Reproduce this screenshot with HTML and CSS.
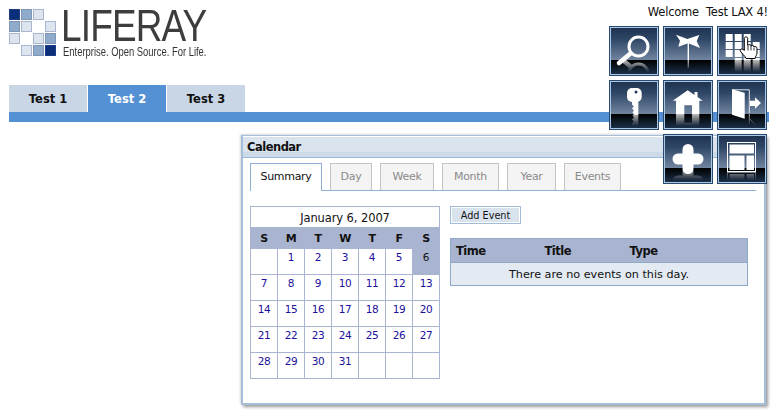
FILE: index.html
```html
<!DOCTYPE html>
<html lang="en">
<head>
<meta charset="utf-8">
<title>Liferay Calendar</title>
<link rel="stylesheet" href="styles.css">
</head>
<body>
<svg class="defs" width="0" height="0" aria-hidden="true">
  <defs>
    <linearGradient id="sky" x1="0" y1="0" x2="0" y2="1">
      <stop offset="0" stop-color="#1e3350"/>
      <stop offset="0.35" stop-color="#2f4766"/>
      <stop offset="1" stop-color="#7185a0"/>
    </linearGradient>
    <linearGradient id="floor" x1="0" y1="0" x2="0" y2="1">
      <stop offset="0" stop-color="#000"/>
      <stop offset="1" stop-color="#1b3049"/>
    </linearGradient>
    <linearGradient id="fadeGrad" gradientUnits="userSpaceOnUse" x1="0" y1="34" x2="0" y2="46">
      <stop offset="0" stop-color="#fff" stop-opacity="0.75"/>
      <stop offset="1" stop-color="#fff" stop-opacity="0"/>
    </linearGradient>
    <mask id="fade" maskUnits="userSpaceOnUse" x="2" y="34" width="46" height="14">
      <rect x="2" y="34" width="46" height="14" fill="url(#fadeGrad)"/>
    </mask>
    <symbol id="base" viewBox="0 0 50 50">
      <rect x="0.5" y="0.5" width="49" height="49" fill="#a9c8e8" stroke="#2b4a6d"/>
      <rect x="2" y="2" width="46" height="32" fill="url(#sky)"/>
      <rect x="2" y="34" width="46" height="14" fill="url(#floor)"/>
    </symbol>
    <g id="g-search">
      <circle cx="29.5" cy="20.5" r="9.5" fill="none" stroke="#fff" stroke-width="3"/>
      <path d="M21.5 27.5 10 37" fill="none" stroke="#fff" stroke-width="4.5" stroke-linecap="round"/>
    </g>
    <g id="g-bow">
      <path d="M13 8.700 24.300 13 36.300 9 33.700 15.300 37 22 25.300 17.300 15.300 20.700 17 14.700Z" fill="#fff"/>
      <path d="M25.300 17V34" stroke="#fff" stroke-width="1.400"/>
    </g>
    <g id="g-grid" fill="#fff">
      <rect x="8.700" y="8" width="7" height="7"/><rect x="17.700" y="8" width="7" height="7"/><rect x="26.700" y="8" width="7" height="7"/>
      <rect x="8.700" y="16" width="7" height="7"/><rect x="17.700" y="16" width="7" height="7"/><rect x="26.700" y="16" width="7" height="7"/><rect x="35.700" y="16" width="7" height="7"/>
      <rect x="8.700" y="24" width="7" height="7"/><rect x="17.700" y="24" width="7" height="7"/><rect x="26.700" y="24" width="7" height="7"/><rect x="35.700" y="24" width="7" height="7"/>
      <rect x="17.700" y="32" width="7" height="2"/><rect x="26.700" y="32" width="7" height="2"/><rect x="35.700" y="32" width="7" height="2"/>
    </g>
    <g id="g-key">
      <rect x="18" y="8" width="14.700" height="14" rx="5" fill="#fff"/>
      <path d="M23 21H29.300V34.700H25.500L23.500 32.500 25 30.500 23 28.500 24.800 26.500 23 24.500Z" fill="#fff"/>
      <circle cx="27" cy="12" r="1.500" fill="#23385a"/>
    </g>
    <g id="g-home">
      <path d="M9.700 20.700 24.700 10.300 31.500 15V12H34.500V17L39.700 20.700H36.300V34H29V25.300H21.300V34H13V20.700Z" fill="#fff"/>
    </g>
    <g id="g-door">
      <path d="M15 9.800H32.300V33" fill="none" stroke="#dfe6ee" stroke-width="1"/>
      <path d="M15 9.300 27.700 12.700V38.700L15 34.700Z" fill="#fff"/>
      <path d="M33 20.700H38V17.300L44 23 38 28.700V26H33Z" fill="#fff"/>
    </g>
    <g id="g-plus">
      <path d="M25 15.500V34.500M15 25H35" stroke="#fff" stroke-width="11" stroke-linecap="round" fill="none"/>
    </g>
    <g id="g-layout">
      <rect x="10.500" y="8.500" width="28" height="29" fill="none" stroke="#fff"/>
      <rect x="12.500" y="10.500" width="24.500" height="9" fill="#fff"/>
      <rect x="12.500" y="21.500" width="15" height="14.500" fill="#fff"/>
      <rect x="29.500" y="21.500" width="7.500" height="14.500" fill="#fff"/>
    </g>
    <g id="g-hand">
      <path d="M27.300 12.500C27.300 10.300 30.700 10.300 30.700 12.500V19.500C32 18 34 18.500 34 20 35 18.800 37 19.300 37 21 38 20 40 20.500 40 22.500V27C40 29 38.500 30 38 32.500H29C28.500 30 24.500 27.500 23.300 25 22.500 23 25.500 22 27.300 24.500Z" fill="#fff" stroke="#000" stroke-width="1" stroke-linejoin="round"/>
      <path d="M31 20V24.500M34 20V24.500M37 21.500V24.500" stroke="#000" stroke-width="0.800" fill="none"/>
    </g>
  </defs>
</svg>

<nav class="dock" aria-label="Dock">
  <svg class="dock-icon" viewBox="0 0 50 50"><use href="#base"/><use href="#g-search"/><g mask="url(#fade)"><use href="#g-search" transform="matrix(1 0 0 -1 0 68)"/></g></svg>
  <svg class="dock-icon" viewBox="0 0 50 50"><use href="#base"/><use href="#g-bow"/><g mask="url(#fade)"><path d="M25.300 34V42" stroke="#fff" stroke-width="1.400"/></g></svg>
  <svg class="dock-icon" viewBox="0 0 50 50"><use href="#base"/><use href="#g-grid"/><g mask="url(#fade)"><path d="M17.700 34h7v12h-7zM26.700 34h7v12h-7zM35.700 34h7v12h-7z" fill="#fff"/></g><use href="#g-hand"/></svg>
  <svg class="dock-icon" viewBox="0 0 50 50"><use href="#base"/><use href="#g-key"/><g mask="url(#fade)"><use href="#g-key" transform="matrix(1 0 0 -1 0 68)"/></g></svg>
  <svg class="dock-icon" viewBox="0 0 50 50"><use href="#base"/><use href="#g-home"/><g mask="url(#fade)"><use href="#g-home" transform="matrix(1 0 0 -1 0 68)"/></g></svg>
  <svg class="dock-icon" viewBox="0 0 50 50"><use href="#base"/><use href="#g-door"/><g mask="url(#fade)"><path d="M32.300 34V44M33 39 39 46" stroke="#fff" stroke-width="1" fill="none"/></g></svg>
  <span class="dock-gap"></span>
  <svg class="dock-icon" viewBox="0 0 50 50"><use href="#base"/><use href="#g-plus"/><g mask="url(#fade)"><use href="#g-plus" transform="matrix(1 0 0 -1 0 72)"/></g></svg>
  <svg class="dock-icon" viewBox="0 0 50 50"><use href="#base"/><use href="#g-layout"/><g mask="url(#fade)"><use href="#g-layout" transform="matrix(1 0 0 -1 0 76)"/></g></svg>
</nav>

<header class="top">
  <div class="logo">
    <div class="logo-mark">
      <i class="sq d"></i><i class="sq m"></i><i class="sq l"></i><i></i>
      <i class="sq m"></i><i class="sq l"></i><i></i><i class="sq l"></i>
      <i class="sq l"></i><i></i><i class="sq l"></i><i class="sq m"></i>
      <i></i><i class="sq l"></i><i class="sq m"></i><i class="sq d"></i>
    </div>
    <div class="logo-text">
      <div class="logo-name">LIFERAY</div>
      <div class="logo-tag">Enterprise. Open Source. For Life.</div>
    </div>
  </div>
  <div class="welcome">Welcome&nbsp; Test LAX 4!</div>
</header>

<nav class="tabs">
  <a class="tab">Test 1</a>
  <a class="tab active">Test 2</a>
  <a class="tab">Test 3</a>
</nav>
<div class="bar"></div>

<section class="portlet">
  <h2 class="portlet-title">Calendar</h2>
  <div class="portlet-body">
    <ul class="subtabs">
      <li class="subtab current">Summary</li>
      <li class="subtab w42">Day</li>
      <li class="subtab w54">Week</li>
      <li class="subtab w57">Month</li>
      <li class="subtab w49">Year</li>
      <li class="subtab w57">Events</li>
    </ul>
    <div class="columns">
      <table class="cal">
        <caption>January 6, 2007</caption>
        <thead><tr><th>S</th><th>M</th><th>T</th><th>W</th><th>T</th><th>F</th><th>S</th></tr></thead>
        <tbody>
          <tr><td></td><td>1</td><td>2</td><td>3</td><td>4</td><td>5</td><td class="today">6</td></tr>
          <tr><td>7</td><td>8</td><td>9</td><td>10</td><td>11</td><td>12</td><td>13</td></tr>
          <tr><td>14</td><td>15</td><td>16</td><td>17</td><td>18</td><td>19</td><td>20</td></tr>
          <tr><td>21</td><td>22</td><td>23</td><td>24</td><td>25</td><td>26</td><td>27</td></tr>
          <tr><td>28</td><td>29</td><td>30</td><td>31</td><td></td><td></td><td></td></tr>
        </tbody>
      </table>
      <div class="events">
        <button class="add">Add Event</button>
        <table class="ev">
          <thead><tr><th class="c1">Time</th><th class="c2">Title</th><th>Type</th></tr></thead>
          <tbody><tr><td colspan="3">There are no events on this day.</td></tr></tbody>
        </table>
      </div>
    </div>
  </div>
</section>
</body>
</html>
```
FILE: styles.css
```css
* { box-sizing: border-box; }
html, body { margin: 0; padding: 0; }
body {
  width: 778px;
  height: 411px;
  overflow: hidden;
  background: #fff;
  color: #111;
  font-family: "DejaVu Sans", Verdana, sans-serif;
  font-size: 11.5px;
  position: relative;
}
.defs { position: absolute; }

/* dock floats over the page */
.dock {
  position: absolute;
  z-index: 5;
  left: 609px;
  top: 26px;
  width: 158px;
  display: grid;
  grid-template-columns: repeat(3, 50px);
  grid-auto-rows: 50px;
  gap: 4px;
}
.dock-icon { display: block; width: 50px; height: 50px; }

/* header */
.top {
  display: flex;
  justify-content: space-between;
  padding: 9px 10px 0 9px;
  height: 85px;
}
.logo { display: flex; gap: 5px; align-items: flex-start; }
.logo-mark {
  display: grid;
  grid-template-columns: repeat(4, 11px);
  grid-auto-rows: 11px;
  gap: 1px;
}
.sq { display: block; border: 1px solid #aab6d0; background: #dbe4ef; }
.sq.m { background: #8fabcc; border-color: #7f95b5; }
.sq.d { background: #0a2f7a; border-color: #1d3c82; }
.sq.l { background: #dbe4ef; border-color: #aab6d0; }
.logo-name {
  font-family: "Liberation Sans", sans-serif;
  font-size: 44px;
  line-height: 34px;
  color: #3d3d3d;
  letter-spacing: -1px;
  transform: scaleX(0.84);
  transform-origin: 0 0;
  white-space: nowrap;
}
.logo-tag {
  font-family: "Liberation Sans", sans-serif;
  font-size: 12px;
  line-height: 14px;
  color: #333;
  margin: 2px 0 0 2px;
  transform: scaleX(0.785);
  transform-origin: 0 0;
  white-space: nowrap;
}
.welcome { font-size: 11.500px; line-height: 14px; margin-top: -4px; letter-spacing: -0.200px; color: #111; }

/* page tabs */
.tabs { display: flex; gap: 1px; padding-left: 9px; height: 27px; }
.tab {
  width: 78px;
  background: #c9d6e6;
  color: #111;
  font-weight: 700;
  font-size: 11.500px;
  line-height: 28px;
  text-align: center;
}
.tab.active { background: #5490d4; color: #fff; }
.bar { height: 10px; margin: 0 9px; background: #5490d4; }

/* portlet */
.portlet {
  margin: 13px 0 0 241px;
  width: 525px;
  height: 270px;
  background: #fff;
  border: 1px solid #a5bedb;
  border-left-width: 2px;
  border-right-width: 2px;
  border-bottom-width: 2px;
  box-shadow: 2px 2px 3px #9a9a9a, -1px -1px 2px #ddd;
}
.portlet-title {
  margin: 1px 0 0;
  height: 21px;
  padding-left: 4px;
  background: linear-gradient(#d9e3ee 15px, #cddaea 15px);
  border-bottom: 1px solid #9ab8d8;
  font-size: 11.500px;
  font-weight: 700;
  letter-spacing: -0.500px;
  line-height: 20px;
  color: #111;
}
.portlet-body { padding: 5px 8px 0 7px; }
.subtabs {
  list-style: none;
  margin: 0;
  padding: 0;
  display: flex;
  gap: 8px;
  height: 28px;
  border-bottom: 1px solid #8fb0d4;
}
.subtab {
  height: 27px;
  border: 1px solid #c4c4c4;
  border-bottom: 0;
  background: #f4f4f4;
  color: #8a8a8a;
  font-size: 11px;
  letter-spacing: -0.300px;
  line-height: 26px;
  text-align: center;
}
.subtab.current {
  width: 72px;
  height: 28px;
  background: #fff;
  border-color: #8fb0d4;
  color: #111;
}
.w42 { width: 42px; }
.w49 { width: 49px; }
.w54 { width: 54px; }
.w57 { width: 57px; }

.columns { display: flex; gap: 10px; margin-top: 15px; align-items: flex-start; }

/* calendar */
.cal {
  width: 190px;
  border-collapse: collapse;
  table-layout: fixed;
  font-size: 10.500px;
  letter-spacing: -0.400px;
}
.cal caption {
  height: 21px;
  border: 1px solid #a9b4d0;
  border-bottom: 0;
  line-height: 22px;
  font-size: 11.500px;
  letter-spacing: -0.100px;
  text-align: center;
  color: #111;
}
.cal th {
  height: 21px;
  padding: 0;
  background: #a9b4d0;
  border: 1px solid #a9b4d0;
  font-size: 11px;
  font-weight: 700;
  color: #111;
}
.cal td {
  height: 26px;
  padding: 2px 0 0;
  vertical-align: top;
  text-align: center;
  border: 1px solid #a9b4d0;
  color: #1c109c;
}
.cal td.today { background: #a9b4d0; color: #111; }

/* events */
.events { width: 298px; }
.add {
  display: block;
  width: 71px;
  height: 18px;
  padding: 0;
  font: 9.700px "DejaVu Sans", Verdana, sans-serif;
  color: #111;
  background: #d9e3ee;
  border: 1px solid #a0bcd8;
  box-shadow: inset 0 0 0 1px #fff;
}
.ev {
  width: 298px;
  margin-top: 14px;
  border-collapse: collapse;
  table-layout: fixed;
}
.ev th {
  height: 24px;
  padding: 0 0 0 5px;
  text-align: left;
  background: #a9b4d0;
  border: 1px solid #8fa9c8;
  border-width: 1px 0;
  font-size: 11.500px;
  letter-spacing: -0.500px;
  font-weight: 700;
  color: #111;
}
.ev th:first-child { border-left-width: 1px; }
.ev th:last-child { border-right-width: 1px; }
.ev .c1 { width: 89px; }
.ev .c2 { width: 85px; }
.ev td {
  height: 23px;
  background: #e3eaf2;
  border: 1px solid #8fa9c8;
  text-align: center;
  color: #111;
  font-size: 11.200px;
}
```
